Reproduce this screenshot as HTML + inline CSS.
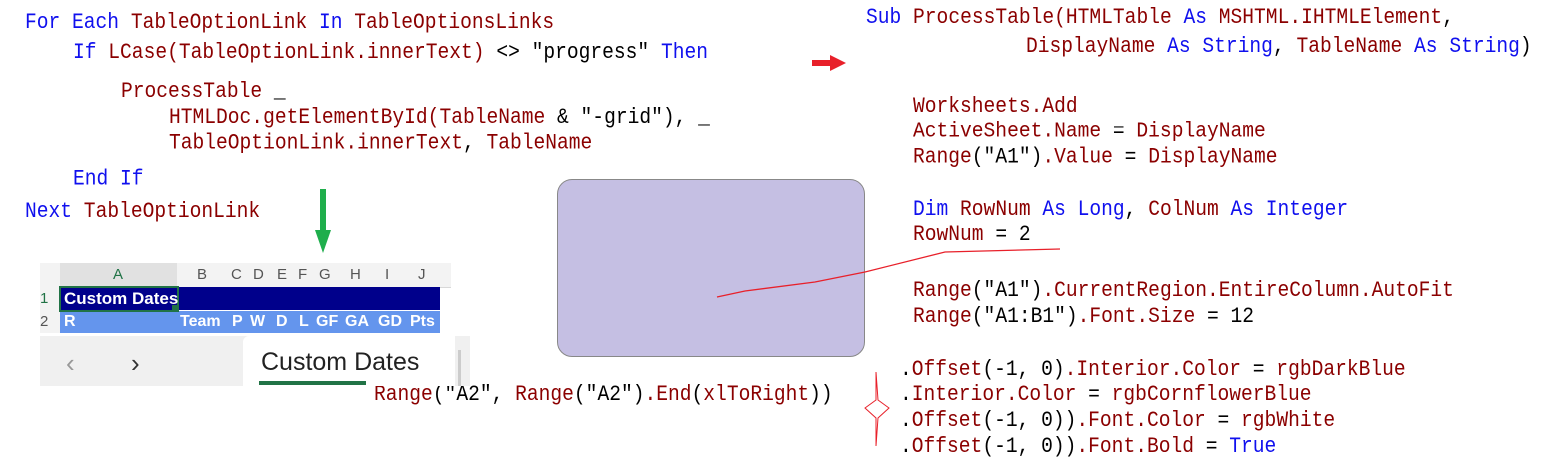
<!DOCTYPE html>
<html><head><meta charset="utf-8"><style>
body{margin:0;width:1558px;height:465px;background:#fff;position:relative;overflow:hidden;font-family:"Liberation Mono",monospace}
.c{position:absolute;white-space:pre;font-size:19.6px;line-height:24px;color:#8b0000;transform:translateY(-12px) scaleY(1.15);transform-origin:0 50%}
.k{color:#1010ee}.b{color:#000}
.x{position:absolute;font-family:"Liberation Sans",sans-serif}
.r2 span{position:absolute}
</style></head><body>
<div class="c" style="left:25px;top:22px"><span class="k">For Each</span> TableOptionLink <span class="k">In</span> TableOptionsLinks</div>
<div class="c" style="left:73px;top:52px"><span class="k">If</span> LCase(TableOptionLink.innerText) <span class="b">&lt;&gt; "progress"</span> <span class="k">Then</span></div>
<div class="c" style="left:121px;top:91px">ProcessTable <span class="b">_</span></div>
<div class="c" style="left:169px;top:117px">HTMLDoc.getElementById(TableName <span class="b">&amp; "-grid"), _</span></div>
<div class="c" style="left:169px;top:143px">TableOptionLink.innerText<span class="b">,</span> TableName</div>
<div class="c" style="left:73px;top:179px"><span class="k">End If</span></div>
<div class="c" style="left:25px;top:211px"><span class="k">Next</span> TableOptionLink</div>

<div class="c" style="left:866px;top:17px"><span class="k">Sub</span> ProcessTable(HTMLTable <span class="k">As</span> MSHTML.IHTMLElement<span class="b">,</span></div>
<div class="c" style="left:1026px;top:46px">DisplayName <span class="k">As String</span><span class="b">,</span> TableName <span class="k">As String</span><span class="b">)</span></div>
<div class="c" style="left:913px;top:106px">Worksheets.Add</div>
<div class="c" style="left:913px;top:131px">ActiveSheet.Name <span class="b">=</span> DisplayName</div>
<div class="c" style="left:913px;top:157px">Range<span class="b">("A1")</span>.Value <span class="b">=</span> DisplayName</div>
<div class="c" style="left:913px;top:209px"><span class="k">Dim</span> RowNum <span class="k">As Long</span><span class="b">,</span> ColNum <span class="k">As Integer</span></div>
<div class="c" style="left:913px;top:234px">RowNum <span class="b">= 2</span></div>
<div class="c" style="left:913px;top:290px">Range<span class="b">("A1")</span>.CurrentRegion.EntireColumn.AutoFit</div>
<div class="c" style="left:913px;top:316px">Range<span class="b">("A1:B1")</span>.Font.Size <span class="b">= 12</span></div>
<div class="c" style="left:900px;top:369px"><span class="b">.</span>Offset<span class="b">(-1, 0)</span>.Interior.Color <span class="b">=</span> rgbDarkBlue</div>
<div class="c" style="left:900px;top:394px"><span class="b">.</span>Interior.Color <span class="b">=</span> rgbCornflowerBlue</div>
<div class="c" style="left:900px;top:420px"><span class="b">.</span>Offset<span class="b">(-1, 0))</span>.Font.Color <span class="b">=</span> rgbWhite</div>
<div class="c" style="left:900px;top:446px"><span class="b">.</span>Offset<span class="b">(-1, 0))</span>.Font.Bold <span class="b">=</span> <span class="k">True</span></div>
<div class="c" style="left:374px;top:394px">Range<span class="b">("A2",</span> Range<span class="b">("A2")</span>.End<span class="b">(</span>xlToRight<span class="b">))</span></div>

<!-- excel -->
<div style="position:absolute;left:40px;top:263px;width:411px;height:24px;background:#f3f3f3;border-bottom:1px solid #d8d8d8"></div>
<div style="position:absolute;left:60px;top:263px;width:117px;height:24px;background:#e1e1e1"></div>
<div style="position:absolute;left:40px;top:287px;width:20px;height:46px;background:#f3f3f3"></div>
<div class="x" style="left:0;top:266px;font-size:15px;color:#555;width:451px;height:20px">
<span style="position:absolute;left:113px;color:#217346">A</span><span style="position:absolute;left:197px">B</span><span style="position:absolute;left:231px">C</span><span style="position:absolute;left:253px">D</span><span style="position:absolute;left:277px">E</span><span style="position:absolute;left:298px">F</span><span style="position:absolute;left:319px">G</span><span style="position:absolute;left:350px">H</span><span style="position:absolute;left:385px">I</span><span style="position:absolute;left:418px">J</span></div>
<div class="x" style="left:40px;top:290px;font-size:15px;color:#217346">1</div>
<div class="x" style="left:40px;top:313px;font-size:15px;color:#555">2</div>
<div style="position:absolute;left:60px;top:287px;width:380px;height:23px;background:#00008b"></div>
<div style="position:absolute;left:60px;top:311px;width:380px;height:22px;background:#6495ed"></div>
<div style="position:absolute;left:59px;top:286px;width:116px;height:22px;border:2px solid #217346"></div>
<div style="position:absolute;left:172px;top:305px;width:7px;height:7px;background:#217346"></div>
<div class="x" style="left:64px;top:289px;font-size:17px;font-weight:bold;color:#fff">Custom Dates</div>
<div class="x r2" style="left:0;top:313px;font-size:16px;font-weight:bold;color:#fff;width:451px;height:20px">
<span style="left:64px">R</span><span style="left:180px">Team</span><span style="left:232px">P</span><span style="left:250px">W</span><span style="left:276px">D</span><span style="left:299px">L</span><span style="left:316px">GF</span><span style="left:345px">GA</span><span style="left:378px">GD</span><span style="left:410px">Pts</span></div>
<div style="position:absolute;left:40px;top:336px;width:430px;height:50px;background:#f0f0f0"></div>
<div style="position:absolute;left:243px;top:336px;width:212px;height:50px;background:#fff;border-top-left-radius:6px"></div>
<div style="position:absolute;left:458px;top:350px;width:3px;height:36px;background:#ccc"></div>
<div class="x" style="left:66px;top:348px;font-size:26px;color:#999">&#8249;</div>
<div class="x" style="left:131px;top:348px;font-size:26px;color:#333">&#8250;</div>
<div class="x" style="left:261px;top:348px;font-size:25px;color:#222">Custom Dates</div>
<div style="position:absolute;left:259px;top:381px;width:107px;height:4px;background:#217346"></div>

<div style="position:absolute;left:557px;top:179px;width:306px;height:176px;background:#c5bfe3;border:1px solid #888;border-radius:15px"></div>

<svg style="position:absolute;left:0;top:0" width="1558" height="465">
<rect x="320" y="189" width="6" height="42" fill="#1fae4c"/><polygon points="315,230 331,230 323,253" fill="#1fae4c"/>
<rect x="812" y="60" width="20" height="6" fill="#e8202a"/><polygon points="830,55 846,63 830,71" fill="#e8202a"/>
<path d="M717,297 L745,291 L815,282 L865,272 L945,252 L1060,249" stroke="#e8202a" stroke-width="1.3" fill="none"/>
<path d="M876,372 L876,400 L865,408 L876,418 L876,446 L878,418 L889,408 L878,400 Z" stroke="#e8202a" stroke-width="1" fill="none"/>
</svg>
</body></html>
